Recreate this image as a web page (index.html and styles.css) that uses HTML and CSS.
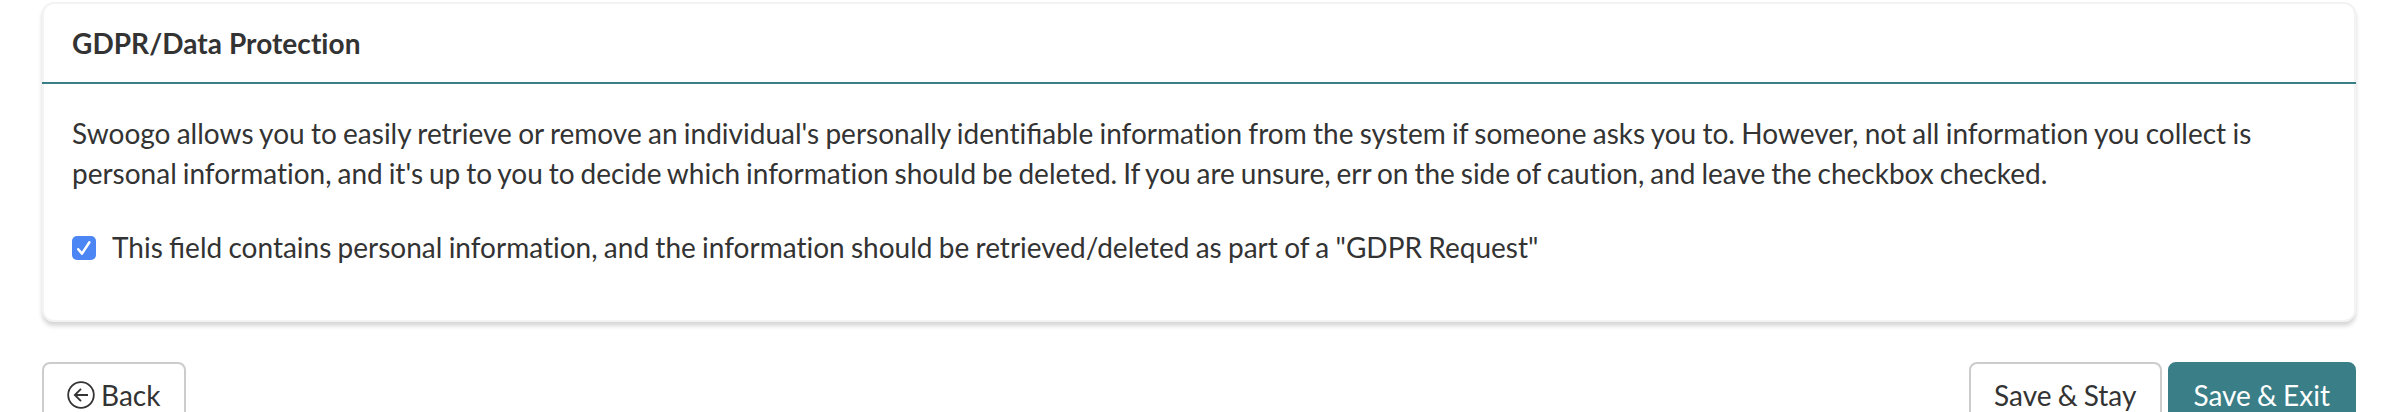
FILE: index.html
```
<!DOCTYPE html>
<html lang="en">
<head>
  <meta charset="UTF-8">
  <meta name="viewport" content="width=device-width, initial-scale=1.0">
  <title>GDPR/Data Protection</title>
  <link rel="stylesheet" href="styles.css">
</head>
<body>

  <div class="panel">
    <div class="panel-heading">GDPR/Data Protection</div>
    <div class="panel-body">
      <p>Swoogo allows you to easily retrieve or remove an individual's personally identi<span class="liga">fi</span>able information from the system if someone asks you to. However, not all information you collect is <span class="line-two">personal information, and it's up to you to decide which information should be deleted. If you are unsure, err on the side of caution, and leave the checkbox checked.</span></p>
      <label class="checkbox">
        <svg class="check" viewBox="0 0 24 24">
          <rect width="24" height="24" rx="5" fill="#4c86f5"/>
          <path d="M6.2 13.2L10 17.6L17.4 6.2" fill="none" stroke="#fff" stroke-width="2.5" stroke-linecap="round" stroke-linejoin="round"/>
        </svg>
        <span>This <span class="liga">fi</span>eld contains personal information, and the information should be retrieved/deleted as part of a "GDPR Request"</span>
      </label>
    </div>
  </div>

  <div class="actions">
    <button class="btn">
      <svg class="icon" viewBox="0 0 28 28">
        <g fill="none" stroke="#333" stroke-width="1.8">
          <circle cx="14" cy="14" r="12.8"/>
          <path d="M21 14H8M14 7.8L7.8 14L14 20.2"/>
        </g>
      </svg>
      Back
    </button>
    <div class="save-group">
      <button class="btn">Save &amp; Stay</button>
      <button class="btn btn-primary">Save &amp; Exit</button>
    </div>
  </div>

</body>
</html>
```
FILE: styles.css
```
body {
  height: 412px;
  margin: 0;
  padding: 2px 46px 0 42px;
  box-sizing: border-box;
  overflow: hidden;
  background-color: #fff;
  color: #333;
  font-family: Lato, sans-serif;
  font-size: 28px;
  line-height: 40px;
  font-variant-ligatures: none;
  word-spacing: -0.87px;
}

.liga {
  font-variant-ligatures: normal;
}

.line-two {
  word-spacing: -1.24px;
}

.panel {
  height: 320px;
  box-sizing: border-box;
  background-color: #fff;
  border: 2px solid #f3f3f3;
  border-radius: 12px;
  box-shadow: 0 4px 4px rgba(0, 0, 0, 0.16);
}

.panel-heading {
  margin: 0 -2px;
  padding: 19px 30px;
  height: 40px;
  border-bottom: 2px solid #3a7e87;
  font-weight: bold;
  letter-spacing: 0.05px;
  word-spacing: 0;
}

.panel-body {
  padding: 29px 28px;
}

.panel-body p {
  margin: 0 0 34px;
}

.checkbox {
  display: flex;
  align-items: center;
  gap: 16px;
}

.check {
  width: 24px;
  height: 24px;
  margin-top: 2px;
}

.actions {
  display: flex;
  justify-content: space-between;
  margin-top: 40px;
}

.save-group {
  display: flex;
  gap: 6px;
}

.btn {
  display: flex;
  align-items: center;
  gap: 6px;
  padding: 11px 24px 12px 23px;
  border: 2px solid #ccc;
  border-radius: 8px;
  background-color: #fff;
  color: #333;
  font: inherit;
  word-spacing: -1px;
  cursor: pointer;
}

.btn-primary {
  background-color: #3a7e87;
  border-color: #3a7e87;
  color: #fff;
}

.icon {
  width: 28px;
  height: 28px;
}
```
